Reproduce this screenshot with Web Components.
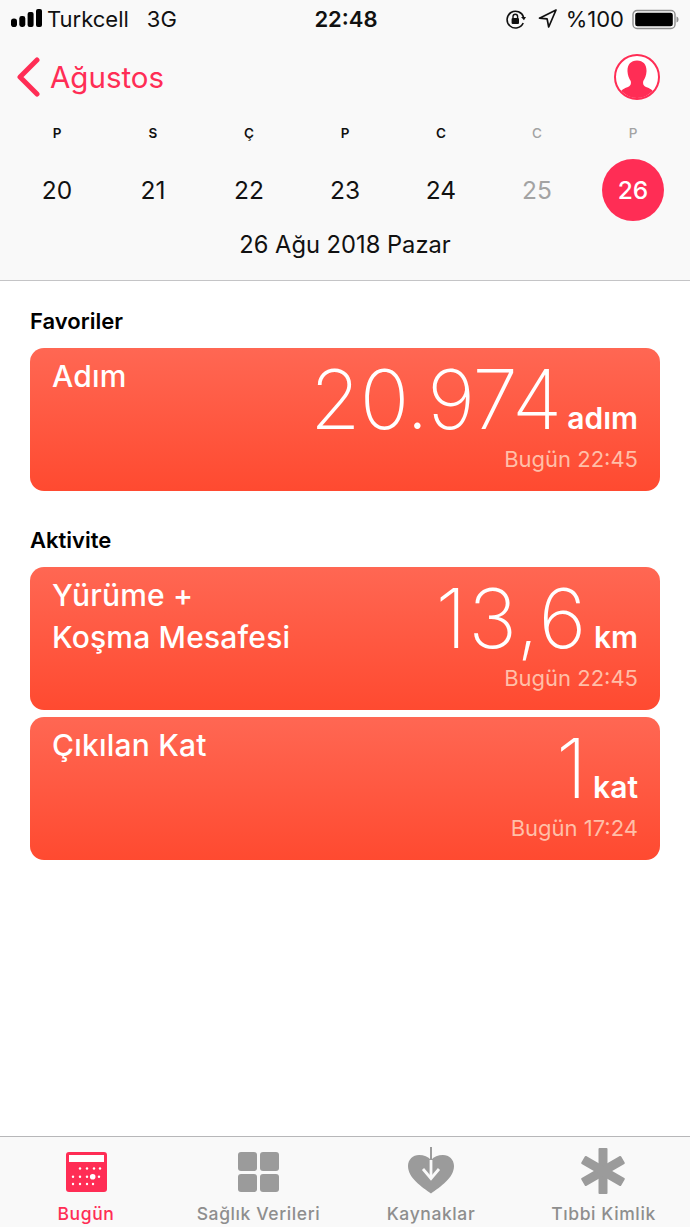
<!doctype html>
<html lang="tr">
<head>
<meta charset="utf-8">
<title>Sağlık</title>
<style>
  html, body { margin: 0; padding: 0; background: #fff; }
  body { font-family: Inter, "Liberation Sans", sans-serif; }
  health-app { height: 1227px; }
</style>
</head>
<body>
<health-app>
  <status-bar slot="top"></status-bar>
  <nav-bar slot="top" title="Ağustos"></nav-bar>
  <week-strip slot="top" label="26 Ağu 2018 Pazar"></week-strip>

  <section-title>Favoriler</section-title>
  <metric-card name="Adım" value="20.974" spacing="-1" unit="adım" when="Bugün 22:45"></metric-card>

  <section-title class="next">Aktivite</section-title>
  <metric-card name="Yürüme +&#10;Koşma Mesafesi" value="13,6" spacing="1.5" unit="km" when="Bugün 22:45"></metric-card>
  <metric-card name="Çıkılan Kat" value="1" spacing="0" unit="kat" when="Bugün 17:24"></metric-card>

  <tab-bar slot="bottom"></tab-bar>
</health-app>

<script>
const PINK = '#ff2d55';

class HealthApp extends HTMLElement {
  constructor() {
    super();
    this.attachShadow({ mode: 'open' }).innerHTML = `
      <style>
        :host { display: flex; flex-direction: column; width: 690px; background: #fff; }
        header { background: #f9f9f9; border-bottom: 1px solid #c4c4c6; height: 281px; box-sizing: border-box; }
        main { flex: 1; padding: 0 30px; display: flex; flex-direction: column; }
        ::slotted(.next) { margin-top: 9px; }
        ::slotted(metric-card) { margin-top: 7px; }
      </style>
      <header><slot name="top"></slot></header>
      <main><slot></slot></main>
      <slot name="bottom"></slot>`;
  }
}

class StatusBar extends HTMLElement {
  constructor() {
    super();
    this.attachShadow({ mode: 'open' }).innerHTML = `
      <style>
        :host { display: grid; grid-template-columns: 1fr auto 1fr; align-items: center; height: 38px; padding: 0 11px; font-size: 22px; color: #111; }
        .left, .right { display: flex; align-items: center; }
        .right { justify-content: flex-end; }
        .signal { margin-top: -2px; }
        .carrier { margin-left: 4px; }
        .net { margin-left: 18px; }
        .time { font-weight: 600; margin-left: 2px; }
        .nav { margin-left: 12px; }
        .pct { margin-left: 9px; }
        .bat { margin-left: 8px; }
        svg { display: block; }
      </style>
      <div class="left">
        <svg class="signal" width="32" height="18" viewBox="0 0 32 18" fill="#000">
          <rect x="0" y="9.500" width="6" height="8.500" rx="2.800"/>
          <rect x="8.300" y="7" width="6" height="11" rx="2.400"/>
          <rect x="16.600" y="3" width="6" height="15" rx="2"/>
          <rect x="25" y="0" width="6" height="18" rx="2"/>
        </svg>
        <span class="carrier">Turkcell</span><span class="net">3G</span>
      </div>
      <div class="time">22:48</div>
      <div class="right">
        <svg width="21" height="21" viewBox="0 0 21 21">
          <path d="M18.600 8.400A8.400 8.400 0 1 0 18.200 14" fill="none" stroke="#111" stroke-width="1.600"/>
          <path d="M16 8l3 3.200 2-3.200z" fill="#111"/>
          <rect x="6.600" y="9" width="7.400" height="6" rx="1" fill="#111"/>
          <path d="M8 9V7.600a2.300 2.300 0 0 1 4.600 0V9" fill="none" stroke="#111" stroke-width="1.400"/>
        </svg>
        <svg class="nav" width="19" height="20" viewBox="0 0 19 20">
          <path d="M18 1L1.500 9.200l7.600.6 1.600 8.200z" fill="none" stroke="#111" stroke-width="1.700" stroke-linejoin="round"/>
        </svg>
        <span class="pct">%100</span>
        <svg class="bat" width="47" height="21" viewBox="0 0 47 21">
          <rect x="1" y="1.500" width="42" height="18" rx="4" fill="none" stroke="#8e8e8e" stroke-width="1.400"/>
          <rect x="3.200" y="3.700" width="37.600" height="13.600" rx="2.200" fill="#000"/>
          <path d="M44.500 7.500c1.400.3 2 1.500 2 3s-.6 2.700-2 3z" fill="#8e8e8e"/>
        </svg>
      </div>`;
  }
}

class NavBar extends HTMLElement {
  constructor() {
    super();
    this.attachShadow({ mode: 'open' }).innerHTML = `
      <style>
        :host { display: flex; align-items: center; justify-content: space-between; height: 78px; padding: 0 30px 0 16px; color: ${PINK}; font-size: 29.500px; }
        .back { display: flex; align-items: center; gap: 10px; }
        svg { display: block; }
      </style>
      <div class="back">
        <svg width="24" height="40" viewBox="0 0 24 40"><path d="M21 3L4 20l17 17" fill="none" stroke="${PINK}" stroke-width="5" stroke-linecap="round" stroke-linejoin="round"/></svg>
        <span>${this.getAttribute('title')}</span>
      </div>
      <svg width="46" height="46" viewBox="0 0 46 46">
        <defs><clipPath id="c"><circle cx="23" cy="23" r="21"/></clipPath></defs>
        <circle cx="23" cy="23" r="22" fill="#fff" stroke="${PINK}" stroke-width="2"/>
        <path clip-path="url(#c)" d="M23 6.500c6.500 0 9.800 4.500 9.500 11-.2 4-1.500 7-3.200 9.500-.7 3 .2 5 2.700 6 4 1.500 6.500 2.500 8 6v8H6v-8c1.500-3.500 4-4.500 8-6 2.500-1 3.400-3 2.700-6-1.700-2.500-3-5.500-3.200-9.500-.3-6.500 3-11 9.500-11z" fill="${PINK}"/>
      </svg>`;
  }
}

class DayCell extends HTMLElement {
  constructor() {
    super();
    const selected = this.hasAttribute('selected');
    const muted = this.hasAttribute('muted');
    this.attachShadow({ mode: 'open' }).innerHTML = `
      <style>
        :host { display: flex; flex-direction: column; align-items: center; width: 96px; }
        .wd { font-size: 13.500px; font-weight: ${muted || selected ? 500 : 600}; height: 18px; line-height: 18px; color: ${muted || selected ? '#a3a3a3' : '#111'}; }
        .num { margin-top: 17px; width: 62px; height: 62px; line-height: 63px; border-radius: 50%; text-align: center; font-size: 24.500px;
               color: ${selected ? '#fff' : muted ? '#a3a3a3' : '#111'}; background: ${selected ? PINK : 'none'}; ${selected ? 'font-weight:500;' : ''} }
      </style>
      <div class="wd">${this.getAttribute('wd')}</div>
      <div class="num">${this.getAttribute('num')}</div>`;
  }
}

class WeekStrip extends HTMLElement {
  constructor() {
    super();
    this.attachShadow({ mode: 'open' }).innerHTML = `
      <style>
        :host { display: block; }
        .row { display: flex; justify-content: center; padding-top: 8px; }
        .label { text-align: center; font-size: 23.700px; color: #111; margin-top: 10px; line-height: 28px; }
      </style>
      <div class="row">
        <day-cell wd="P" num="20"></day-cell>
        <day-cell wd="S" num="21"></day-cell>
        <day-cell wd="Ç" num="22"></day-cell>
        <day-cell wd="P" num="23"></day-cell>
        <day-cell wd="C" num="24"></day-cell>
        <day-cell wd="C" num="25" muted></day-cell>
        <day-cell wd="P" num="26" selected></day-cell>
      </div>
      <div class="label">${this.getAttribute('label')}</div>`;
  }
}

class SectionTitle extends HTMLElement {
  constructor() {
    super();
    this.attachShadow({ mode: 'open' }).innerHTML = `
      <style>
        :host { display: block; font-size: 22px; font-weight: 600; line-height: 26px; color: #000; padding: 27px 0 7px; }
      </style>
      <slot></slot>`;
  }
}

class MetricCard extends HTMLElement {
  constructor() {
    super();
    const name = this.getAttribute('name').replace(/\n/g, '<br>');
    this.attachShadow({ mode: 'open' }).innerHTML = `
      <style>
        :host { display: flex; justify-content: space-between; box-sizing: border-box; height: 143px; padding: 7px 22px 0 22px; border-radius: 14px; color: #fff;
                background: linear-gradient(#ff6753, #ff4a30); }
        .name { font-size: 30px; font-weight: 500; line-height: 42px; letter-spacing: .2px; }
        .side { display: flex; flex-direction: column; align-items: flex-end; margin-top: 4px; }
        .top { display: flex; align-items: baseline; gap: 6px; height: 82px; }
        .value { font-size: 82px; font-weight: 250; letter-spacing: ${this.getAttribute('spacing')}px; line-height: 82px; }
        .unit { font-size: 30px; font-weight: 600; }
        .when { font-size: 22px; color: #ffbfa8; margin-top: 4px; line-height: 28px; }
      </style>
      <div class="name">${name}</div>
      <div class="side">
        <div class="top"><span class="value">${this.getAttribute('value')}</span><span class="unit">${this.getAttribute('unit')}</span></div>
        <div class="when">${this.getAttribute('when')}</div>
      </div>`;
  }
}

class TabItem extends HTMLElement {
  constructor() {
    super();
    const active = this.hasAttribute('active');
    this.attachShadow({ mode: 'open' }).innerHTML = `
      <style>
        :host { display: flex; flex-direction: column; align-items: center; flex: 1; color: ${active ? PINK : '#8e8e8e'}; }
        .icon { height: 52px; display: flex; align-items: center; justify-content: center; }
        .label { font-size: 17.500px; font-weight: 500; margin-top: 5px; line-height: 22px; letter-spacing: .6px; }
      </style>
      <div class="icon"><slot></slot></div>
      <div class="label">${this.getAttribute('label')}</div>`;
  }
}

class TabBar extends HTMLElement {
  constructor() {
    super();
    this.attachShadow({ mode: 'open' }).innerHTML = `
      <style>
        :host { display: flex; box-sizing: border-box; height: 91px; padding-top: 9px; background: #f9f9f9; border-top: 1px solid #b7b7b9; }
        svg { display: block; }
        .star { margin: 0 2px 2px 0; }
      </style>
      <tab-item label="Bugün" active style="flex:0 0 172px">
        <svg width="41" height="40" viewBox="0 0 41 40">
          <rect width="41" height="40" rx="3" fill="${PINK}"/>
          <rect x="3" y="3" width="35" height="7" fill="#fff"/>
          <g fill="#fff">
            <circle cx="14" cy="16.500" r="1.200"/><circle cx="21" cy="16.500" r="1.200"/><circle cx="28" cy="16.500" r="1.200"/><circle cx="34" cy="16.500" r="1.200"/>
            <circle cx="7" cy="24.700" r="1.200"/><circle cx="14" cy="24.700" r="1.200"/><circle cx="21" cy="24.700" r="1.200"/><circle cx="26.700" cy="24.700" r="2.800"/><circle cx="33" cy="24.700" r="1.200"/>
            <circle cx="7" cy="32" r="1.200"/><circle cx="14" cy="32" r="1.200"/><circle cx="21" cy="32" r="1.200"/><circle cx="27" cy="32" r="1.200"/>
          </g>
        </svg>
      </tab-item>
      <tab-item label="Sağlık Verileri" style="flex:0 0 173px">
        <svg width="41" height="40" viewBox="0 0 41 40" fill="#9b9b9b">
          <rect width="19" height="19" rx="3"/><rect x="22" width="19" height="19" rx="3"/>
          <rect y="22" width="19" height="18" rx="3"/><rect x="22" y="22" width="19" height="18" rx="3"/>
        </svg>
      </tab-item>
      <tab-item label="Kaynaklar" style="flex:0 0 172px">
        <svg width="46" height="50" viewBox="0 0 46 50">
          <path d="M23 46.500C14 40 0 31 0 19 0 12.500 5 8 11 8c5 0 9 1.800 12 5 3-3.200 7-5 12-5 6 0 11 4.500 11 11 0 12-14 21-23 27.500z" fill="#9b9b9b"/>
          <path d="M23 0v14" stroke="#9b9b9b" stroke-width="2"/>
          <path d="M15 22l8 9.500 8-9.500" fill="none" stroke="#f9f9f9" stroke-width="2.800"/>
          <path d="M23 13v18" stroke="#f9f9f9" stroke-width="2.800"/>
        </svg>
      </tab-item>
      <tab-item label="Tıbbi Kimlik" style="flex:0 0 173px">
        <svg class="star" width="46" height="46" viewBox="0 0 46 46" fill="#9b9b9b">
          <rect x="18.500" y="0" width="9" height="46" rx="1"/>
          <rect x="18.500" y="0" width="9" height="46" rx="1" transform="rotate(60 23 23)"/>
          <rect x="18.500" y="0" width="9" height="46" rx="1" transform="rotate(-60 23 23)"/>
        </svg>
      </tab-item>`;
  }
}

customElements.define('tab-item', TabItem);
customElements.define('tab-bar', TabBar);
customElements.define('metric-card', MetricCard);
customElements.define('section-title', SectionTitle);
customElements.define('day-cell', DayCell);
customElements.define('week-strip', WeekStrip);
customElements.define('nav-bar', NavBar);
customElements.define('status-bar', StatusBar);
customElements.define('health-app', HealthApp);
</script>
</body>
</html>
